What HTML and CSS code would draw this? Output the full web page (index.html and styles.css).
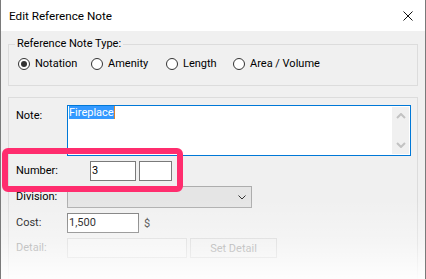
FILE: index.html
```html
<!DOCTYPE html>
<html>
<head>
<meta charset="utf-8">
<link rel="stylesheet" href="styles.css">
</head>
<body>
<div class="window">
  <div class="titlebar">
    <span class="title">Edit Reference Note</span>
    <svg class="close" width="10" height="10" viewBox="0 0 10 10"><path d="M0.5 0.5 L9.5 9.5 M9.5 0.5 L0.5 9.5" stroke="#111" stroke-width="1" fill="none"/></svg>
  </div>
  <div class="content">
    <div class="group type-group">
      <span class="legend">Reference Note Type:</span>
      <div class="radios">
        <div class="radio r1"><span class="circle checked"></span>Notation</div>
        <div class="radio r2"><span class="circle"></span>Amenity</div>
        <div class="radio r3"><span class="circle"></span>Length</div>
        <div class="radio r4"><span class="circle"></span>Area / Volume</div>
      </div>
    </div>
    <div class="group details">
      <div class="row note-row">
        <span class="lbl">Note:</span>
        <div class="textarea">
          <div class="text"><span class="sel">Fireplace</span></div>
          <div class="scroll">
            <svg width="10" height="6" viewBox="0 0 10 6"><path d="M1 5 L5 1 L9 5" stroke="#c2c2c2" stroke-width="2" fill="none"/></svg>
            <svg width="10" height="6" viewBox="0 0 10 6"><path d="M1 1 L5 5 L9 1" stroke="#c2c2c2" stroke-width="2" fill="none"/></svg>
          </div>
        </div>
      </div>
      <div class="row number-row">
        <span class="lbl lbl-wide">Number:</span>
        <div class="input num1">3</div>
        <div class="input num2"></div>
      </div>
      <div class="row division-row">
        <span class="lbl">Division:</span>
        <div class="combo">
          <svg width="8" height="5" viewBox="0 0 8 5"><path d="M0.5 0.5 L4 4 L7.5 0.5" stroke="#333" stroke-width="1" fill="none"/></svg>
        </div>
      </div>
      <div class="row cost-row">
        <span class="lbl">Cost:</span>
        <div class="input cost">1,500</div>
        <span class="currency">$</span>
      </div>
      <div class="row detail-row">
        <span class="lbl disabled">Detail:</span>
        <div class="input detail"></div>
        <div class="btn">Set Detail</div>
      </div>
    </div>
  </div>
  <div class="highlight"></div>
  <div class="fade"></div>
</div>
</body>
</html>
```

FILE: styles.css
```css
html, body {
  margin: 0;
  padding: 0;
  background: #ffffff;
}
body {
  font-family: Roboto, "Liberation Sans", sans-serif;
  font-size: 11px;
  color: #000;
}
.window {
  position: relative;
  width: 426px;
  height: 279px;
  box-sizing: border-box;
  border-left: 1px solid #7a7a7a;
  border-right: 1px solid #7a7a7a;
  overflow: hidden;
  display: flex;
  flex-direction: column;
}
.titlebar {
  height: 31px;
  flex: none;
  background: #fff;
  display: flex;
  align-items: center;
  justify-content: space-between;
  padding: 0 12px 0 8px;
}
.title {
  font-size: 11.7px;
  line-height: 14px;
  color: #000;
}
.close {
  display: block;
}
.content {
  flex: 1;
  background: #f0f0f0;
  padding: 13px 7px 0 7px;
}
.group {
  border: 1px solid #dcdcdc;
  position: relative;
}
.type-group {
  padding: 12px 0 14px 9px;
}
.legend {
  position: absolute;
  top: -8px;
  left: 6px;
  padding: 0 2px;
  line-height: 14px;
  background: #f0f0f0;
}
.radios {
  display: flex;
  align-items: center;
  height: 14px;
  line-height: 14px;
}
.radio {
  display: flex;
  align-items: center;
}
.r1 { width: 73px; }
.r2 { width: 75px; }
.r3 { width: 67px; }
.circle {
  width: 12px;
  height: 12px;
  box-sizing: border-box;
  border: 1px solid #333;
  border-radius: 50%;
  background: #fff;
  margin-right: 5px;
  display: flex;
  align-items: center;
  justify-content: center;
}
.circle.checked::after {
  content: "";
  width: 6px;
  height: 6px;
  border-radius: 50%;
  background: #333;
}
.details {
  margin-top: 11px;
  height: 200px;
  padding: 7px 0 0 7px;
}
.row {
  display: flex;
  align-items: center;
}
.lbl {
  width: 51px;
  flex: none;
  line-height: 14px;
}
.lbl-wide {
  width: 74px;
}
.disabled {
  color: #9c9c9c;
}
.note-row {
  align-items: flex-start;
}
.note-row .lbl {
  padding-top: 4px;
}
.textarea {
  width: 344px;
  height: 51px;
  box-sizing: border-box;
  border: 1px solid #0078d7;
  background: #fff;
  display: flex;
}
.text {
  flex: 1;
  padding: 0 0 0 1px;
}
.sel {
  display: inline-block;
  background: #3399ff;
  color: #fff;
  line-height: 13px;
  border-right: 1px solid #d9822b;
}
.scroll {
  width: 17px;
  margin: 1px;
  background: #f0f0f0;
  display: flex;
  flex-direction: column;
  align-items: center;
  justify-content: space-between;
  padding: 6px 0 6px;
  box-sizing: border-box;
}
.scroll svg {
  display: block;
}
.input {
  box-sizing: border-box;
  height: 20px;
  border: 1px solid #7a7a7a;
  background: #fff;
  line-height: 18px;
  padding-left: 1px;
}
.number-row {
  margin-top: 5px;
}
.num1 {
  width: 46px;
}
.num2 {
  width: 33px;
  margin-left: 3px;
}
.division-row {
  margin-top: 5px;
}
.combo {
  width: 185px;
  height: 22px;
  box-sizing: border-box;
  border: 1px solid #adadad;
  background: #e5e5e5;
  display: flex;
  align-items: center;
  justify-content: flex-end;
  padding-right: 5px;
}
.combo svg {
  display: block;
}
.cost-row {
  margin-top: 5px;
}
.cost {
  width: 72px;
}
.currency {
  margin-left: 5px;
  color: #333;
}
.detail-row {
  margin-top: 5px;
}
.detail {
  width: 120px;
  border-color: #d9d9d9;
  background: #f3f3f3;
}
.btn {
  width: 87px;
  height: 20px;
  margin-left: 3px;
  box-sizing: border-box;
  border: 1px solid #d6d6d6;
  background: #efefef;
  color: #9c9c9c;
  display: flex;
  align-items: center;
  justify-content: center;
}
.highlight {
  position: absolute;
  left: 1px;
  top: 148px;
  width: 181px;
  height: 44px;
  box-sizing: border-box;
  border: 6px solid #ff2d6e;
  border-radius: 6px;
}
.fade {
  position: absolute;
  left: 0;
  right: 0;
  bottom: 0;
  height: 80px;
  background: linear-gradient(to bottom, rgba(255,255,255,0) 0%, rgba(255,255,255,0.35) 55%, rgba(255,255,255,0.9) 100%);
  pointer-events: none;
}
```
